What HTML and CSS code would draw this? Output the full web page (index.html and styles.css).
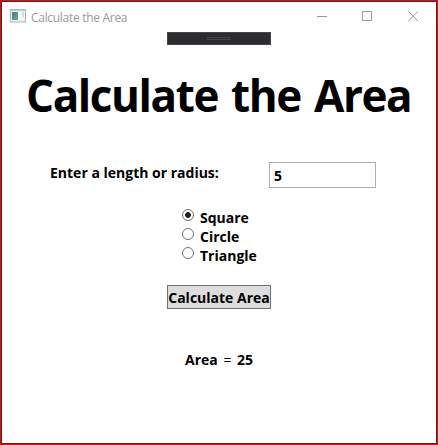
FILE: index.html
```html
<!DOCTYPE html>
<html lang="en">
<head>
<meta charset="utf-8">
<title>Calculate the Area</title>
<link rel="stylesheet" href="styles.css">
</head>
<body>
<div class="window">
  <header class="titlebar">
    <svg class="app-icon" width="16" height="14" viewBox="0 0 16 14">
      <defs><linearGradient id="g" x1="0" y1="0" x2="1" y2="1"><stop offset="0" stop-color="#5274a5"/><stop offset="1" stop-color="#55b28a"/></linearGradient></defs>
      <rect x=".5" y=".5" width="15" height="12.5" fill="#eef0f3" stroke="#aeb2b9"/>
      <path d="M1 1.5h14" stroke="#c8cbd2"/>
      <rect x="2" y="3" width="6" height="8" fill="url(#g)"/>
      <rect x="8" y="3" width="4" height="8" fill="#fff"/>
      <rect x="12" y="3" width="2" height="5" fill="#d5dce6"/>
    </svg>
    <span class="caption">Calculate the Area</span>
    <svg class="controls" width="102" height="10" viewBox="0 0 102 10" fill="none" stroke="#999">
      <path d="M0 5.5h10M45.5.5h9v9h-9zM91.500 .5l9.500 9.500M101 .5l-9.500 9.500"/>
    </svg>
  </header>
  <div class="debug-bar"><span class="grip"></span></div>
  <h1 class="heading">Calculate the Area</h1>
  <div class="entry">
    <label class="prompt" for="length">Enter a length or radius:</label>
    <input class="field" id="length" value="5">
  </div>
  <div class="shapes">
    <label class="shape"><input class="radio" type="radio" name="shape" checked><span>Square</span></label>
    <label class="shape"><input class="radio" type="radio" name="shape"><span>Circle</span></label>
    <label class="shape"><input class="radio" type="radio" name="shape"><span>Triangle</span></label>
  </div>
  <button class="calculate">Calculate Area</button>
  <p class="result">Area <span class="equals">=</span> 25</p>
</div>
</body>
</html>
```
FILE: styles.css
```css
* { box-sizing: border-box; }
body {
  display: flow-root;
  margin: 0;
  background: #f00;
  font: bold 14px/19px "Open Sans", "Noto Sans", sans-serif;
  color: #000;
}
.window {
  display: flex;
  flex-direction: column;
  width: 436px;
  height: 443px;
  margin: 1px;
  border: 1px solid #333;
  background: #fff;
  white-space: nowrap;
}
.titlebar {
  display: flex;
  align-items: center;
  height: 30px;
  padding-left: 8px;
}
.app-icon { margin-top: -2px; }
.caption {
  margin-left: 5px;
  font-size: 12px;
  font-weight: 400;
  letter-spacing: -0.3px;
  color: #999;
}
.controls { margin-left: auto; margin-right: 17px; margin-top: -2px; }
.debug-bar {
  display: flex;
  align-items: center;
  justify-content: center;
  width: 104px;
  height: 13px;
  margin-left: 165px;
  border: 1px solid #46464a;
  background: #2d2d30;
}
.grip {
  width: 24px;
  height: 3px;
  border: solid #46464a;
  border-width: 1px 0;
}
.heading {
  margin: 18px 0 0 24px;
  font-size: 44px;
  line-height: 64px;
  letter-spacing: -1.4px;
  word-spacing: 3px;
}
.entry {
  display: flex;
  margin: 35px 0 0 48px;
}
.prompt { width: 219px; padding-top: 1px; }
.field {
  width: 107px;
  height: 26px;
  padding: 0 4px;
  border: 1px solid #abadb3;
  font: inherit;
}
.shapes { margin: 20px 0 0 180px; }
.shape { display: flex; height: 19px; }
.radio {
  appearance: none;
  width: 12px;
  height: 12px;
  margin: 1px 6px 0 0;
  border: 1px solid #707070;
  border-radius: 50%;
}
.radio:checked { background: radial-gradient(circle, #212121 2.6px, transparent 3.2px); }
.calculate {
  width: 104px;
  height: 24px;
  margin: 20px 0 0 165px;
  padding: 0;
  border: 1px solid #707070;
  background: #ddd;
  font: inherit;
  color: #000;
}
.result { margin: 41px 0 0 183px; word-spacing: 2px; }
.equals { font-weight: 400; }
```
